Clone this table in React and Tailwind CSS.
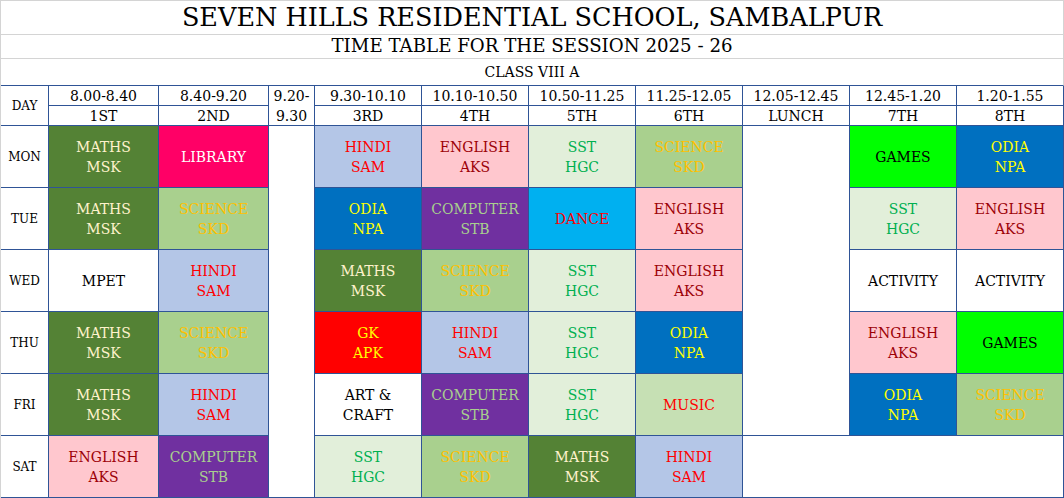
import React from "react";

const S = {
  MATHS: { t: ["MATHS", "MSK"], c: "bg-[#548235] text-[#fff2cc]" },
  LIBRARY: { t: ["LIBRARY"], c: "bg-[#ff0066] text-white" },
  HINDI: { t: ["HINDI", "SAM"], c: "bg-[#b4c6e7] text-[#ff0000]" },
  ENGLISH: { t: ["ENGLISH", "AKS"], c: "bg-[#ffc7ce] text-[#9c0006]" },
  SST: { t: ["SST", "HGC"], c: "bg-[#e2efda] text-[#00b050]" },
  SCIENCE: { t: ["SCIENCE", "SKD"], c: "bg-[#a9d08e] text-[#ffc000]" },
  ODIA: { t: ["ODIA", "NPA"], c: "bg-[#0070c0] text-[#ffff00]" },
  COMPUTER: { t: ["COMPUTER", "STB"], c: "bg-[#7030a0] text-[#a9d08e]" },
  DANCE: { t: ["DANCE"], c: "bg-[#00b0f0] text-[#ff0000]" },
  GAMES: { t: ["GAMES"], c: "bg-[#00ff00] text-black" },
  GK: { t: ["GK", "APK"], c: "bg-[#ff0000] text-[#ffff00]" },
  MUSIC: { t: ["MUSIC"], c: "bg-[#c6e0b4] text-[#ff0000]" },
  MPET: { t: ["MPET"], c: "bg-white text-black" },
  ACTIVITY: { t: ["ACTIVITY"], c: "bg-white text-black" },
  ART: { t: ["ART &", "CRAFT"], c: "bg-white text-black" },
};

const rows = [
  ["MON", ["MATHS", "LIBRARY"], ["HINDI", "ENGLISH", "SST", "SCIENCE"], ["GAMES", "ODIA"]],
  ["TUE", ["MATHS", "SCIENCE"], ["ODIA", "COMPUTER", "DANCE", "ENGLISH"], ["SST", "ENGLISH"]],
  ["WED", ["MPET", "HINDI"], ["MATHS", "SCIENCE", "SST", "ENGLISH"], ["ACTIVITY", "ACTIVITY"]],
  ["THU", ["MATHS", "SCIENCE"], ["GK", "HINDI", "SST", "ODIA"], ["ENGLISH", "GAMES"]],
  ["FRI", ["MATHS", "HINDI"], ["ART", "COMPUTER", "SST", "MUSIC"], ["ODIA", "SCIENCE"]],
  ["SAT", ["ENGLISH", "COMPUTER"], ["SST", "SCIENCE", "MATHS", "HINDI"], null],
];

const B = "border-r border-b border-[#2f5496]";

function Cell({ k }) {
  const s = S[k];
  return (
    <div className={`${B} ${s.c} flex flex-col items-center justify-center text-center text-[14px] leading-[20px]`}>
      {s.t.map((l, i) => (
        <span key={i}>{l}</span>
      ))}
    </div>
  );
}

function Day({ d }) {
  return (
    <div className={`${B} flex items-center justify-center text-[12px]`}>{d}</div>
  );
}

const times = ["8.00-8.40", "8.40-9.20"];
const times2 = ["9.30-10.10", "10.10-10.50", "10.50-11.25", "11.25-12.05", "12.05-12.45", "12.45-1.20", "1.20-1.55"];
const nums1 = ["1ST", "2ND"];
const nums2 = ["3RD", "4TH", "5TH", "6TH", "LUNCH", "7TH", "8TH"];

export default function App() {
  const H = `${B} flex items-center justify-center text-[14px] leading-[20px]`;
  return (
    <div className="w-[1064px] h-[498px] bg-white border-l border-[#d4d4d4] font-['DejaVu_Serif',serif] text-black overflow-hidden">
      <div className="h-[35px] border-t border-b border-r border-[#d4d4d4] flex items-center justify-center text-[25.5px] leading-none">
        SEVEN HILLS RESIDENTIAL SCHOOL, SAMBALPUR
      </div>
      <div className="h-[24px] border-b border-r border-[#d4d4d4] flex items-center justify-center text-[18.2px] leading-none">
        TIME TABLE FOR THE SESSION 2025 - 26
      </div>
      <div className="h-[27px] border-b border-b-[#2f5496] border-r border-r-[#d4d4d4] flex items-center justify-center text-[14px] leading-none">
        CLASS VIII A
      </div>
      <div className="grid grid-cols-[48px_110px_110px_46px_repeat(7,107px)] grid-rows-[20px_20px_repeat(6,62px)]">
        <div className={`${B} row-span-2 flex items-center justify-center text-[12px]`}>DAY</div>
        {times.map((t) => (
          <div key={t} className={H}>{t}</div>
        ))}
        <div className={`${B} row-span-2 flex flex-col items-center justify-center text-[14px] leading-[20px]`}>
          <span>9.20-</span>
          <span>9.30</span>
        </div>
        {times2.map((t) => (
          <div key={t} className={H}>{t}</div>
        ))}
        {nums1.map((t) => (
          <div key={t} className={H}>{t}</div>
        ))}
        {nums2.map((t) => (
          <div key={t} className={H}>{t}</div>
        ))}
        {rows.map(([d, a, b, c], ri) => (
          <React.Fragment key={d}>
            <Day d={d} />
            {a.map((k, i) => (
              <Cell key={"a" + i} k={k} />
            ))}
            {ri === 0 && <div className={`${B} row-span-6 bg-white`} />}
            {b.map((k, i) => (
              <Cell key={"b" + i} k={k} />
            ))}
            {ri === 0 && <div className={`${B} row-span-5 bg-white`} />}
            {c ? c.map((k, i) => <Cell key={"c" + i} k={k} />) : <div className={`${B} col-span-3 bg-white`} />}
          </React.Fragment>
        ))}
      </div>
    </div>
  );
}
